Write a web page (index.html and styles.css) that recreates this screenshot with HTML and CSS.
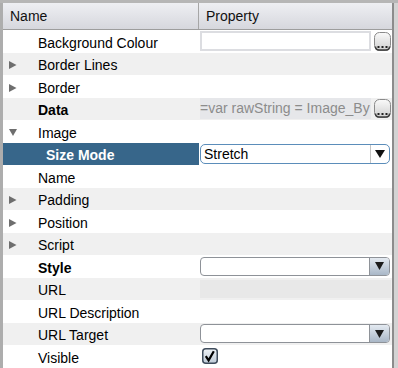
FILE: index.html
```html
<!DOCTYPE html>
<html lang="en">
<head>
    <meta charset="UTF-8">
    <title>Properties</title>
    <link rel="stylesheet" href="styles.css">
</head>
<body>
<div class="frame">
    <div class="table">
        <div class="head">
            <div class="hcell">Name</div>
            <div class="hcell">Property</div>
        </div>
        <div class="rows">
            <div class="row">
                <div class="name"><span class="tog"></span>Background Colour</div>
                <div class="val">
                    <span class="textbox"></span>
                    <span class="dots"><svg width="17" height="19" viewBox="0 0 17 19"><defs><linearGradient id="bg1" x1="0" y1="0" x2="0" y2="1"><stop offset="0" stop-color="#fafafa"/><stop offset="1" stop-color="#cfcfcf"/></linearGradient></defs><rect x="0.5" y="0.5" width="16" height="18" rx="5" fill="url(#bg1)" stroke="#8a8a8a"/><path d="M1.5 14.5 Q1.5 18 5 18 H12 Q15.5 18 15.5 14.5" fill="none" stroke="#3c3c3c" stroke-width="1.5"/><rect x="3.5" y="14" width="2" height="2" fill="#222"/><rect x="7.5" y="14" width="2" height="2" fill="#222"/><rect x="11.5" y="14" width="2" height="2" fill="#222"/></svg></span>
                </div>
            </div>
            <div class="row">
                <div class="name"><span class="tog"><svg width="8" height="8"><polygon points="0,0 7.5,4 0,8" fill="#6e6e6e"/></svg></span>Border Lines</div>
                <div class="val"></div>
            </div>
            <div class="row">
                <div class="name"><span class="tog"><svg width="8" height="8"><polygon points="0,0 7.5,4 0,8" fill="#6e6e6e"/></svg></span>Border</div>
                <div class="val"></div>
            </div>
            <div class="row">
                <div class="name bold"><span class="tog"></span>Data</div>
                <div class="val">
                    <span class="script">=var rawString = Image_By</span>
                    <span class="dots"><svg width="17" height="19" viewBox="0 0 17 19"><defs><linearGradient id="bg2" x1="0" y1="0" x2="0" y2="1"><stop offset="0" stop-color="#fafafa"/><stop offset="1" stop-color="#cfcfcf"/></linearGradient></defs><rect x="0.5" y="0.5" width="16" height="18" rx="5" fill="url(#bg2)" stroke="#8a8a8a"/><path d="M1.5 14.5 Q1.5 18 5 18 H12 Q15.5 18 15.5 14.5" fill="none" stroke="#3c3c3c" stroke-width="1.5"/><rect x="3.5" y="14" width="2" height="2" fill="#222"/><rect x="7.5" y="14" width="2" height="2" fill="#222"/><rect x="11.5" y="14" width="2" height="2" fill="#222"/></svg></span>
                </div>
            </div>
            <div class="row">
                <div class="name"><span class="tog"><svg width="8" height="7"><polygon points="0,0 8,0 4,7" fill="#6e6e6e"/></svg></span>Image</div>
                <div class="val"></div>
            </div>
            <div class="row sel">
                <div class="name bold child"><span class="tog"></span>Size Mode</div>
                <div class="val">
                    <div class="select">
                        <span class="choice">Stretch</span>
                        <span class="arrow"><svg width="10" height="8"><polygon points="0,0 10,0 5,8" fill="#111"/></svg></span>
                    </div>
                </div>
            </div>
            <div class="row">
                <div class="name"><span class="tog"></span>Name</div>
                <div class="val"></div>
            </div>
            <div class="row">
                <div class="name"><span class="tog"><svg width="8" height="8"><polygon points="0,0 7.5,4 0,8" fill="#6e6e6e"/></svg></span>Padding</div>
                <div class="val"></div>
            </div>
            <div class="row">
                <div class="name"><span class="tog"><svg width="8" height="8"><polygon points="0,0 7.5,4 0,8" fill="#6e6e6e"/></svg></span>Position</div>
                <div class="val"></div>
            </div>
            <div class="row">
                <div class="name"><span class="tog"><svg width="8" height="8"><polygon points="0,0 7.5,4 0,8" fill="#6e6e6e"/></svg></span>Script</div>
                <div class="val"></div>
            </div>
            <div class="row">
                <div class="name bold"><span class="tog"></span>Style</div>
                <div class="val">
                    <div class="combo">
                        <span class="choice"></span>
                        <span class="btn"><svg width="9" height="8"><polygon points="0,0 9,0 4.5,8" fill="#1c1c1c"/></svg></span>
                    </div>
                </div>
            </div>
            <div class="row">
                <div class="name"><span class="tog"></span>URL</div>
                <div class="val"><span class="disabled"></span></div>
            </div>
            <div class="row">
                <div class="name"><span class="tog"></span>URL Description</div>
                <div class="val"></div>
            </div>
            <div class="row">
                <div class="name"><span class="tog"></span>URL Target</div>
                <div class="val">
                    <div class="combo">
                        <span class="choice"></span>
                        <span class="btn"><svg width="9" height="8"><polygon points="0,0 9,0 4.5,8" fill="#1c1c1c"/></svg></span>
                    </div>
                </div>
            </div>
            <div class="row">
                <div class="name"><span class="tog"></span>Visible</div>
                <div class="val">
                    <span class="check"><svg width="16" height="16" viewBox="0 0 16 16"><defs><linearGradient id="cb" x1="0" y1="0" x2="0" y2="1"><stop offset="0" stop-color="#eef2f6"/><stop offset="1" stop-color="#bfcbd8"/></linearGradient></defs><rect x="0.75" y="0.75" width="14.5" height="14.5" rx="3" fill="url(#cb)" stroke="#3f4c5c" stroke-width="1.5"/><path d="M3.8 8.2 L6.6 12.4 L11.8 3.2" fill="none" stroke="#000" stroke-width="2.2"/></svg></span>
                </div>
            </div>
        </div>
    </div>
    <div class="scroll"></div>
</div>
</body>
</html>
```

FILE: styles.css
```css
body {
    margin: 0;
    font-family: 'Liberation Sans', Arial, sans-serif;
    font-size: 14px;
    color: #000;
    background: #fff;
}

.frame {
    display: flex;
    width: 398px;
    height: 368px;
    box-sizing: border-box;
    border-top: 3px solid #b6b6b6;
    overflow: hidden;
}

.table {
    flex: 1;
    border-left: 3px solid #adadad;
}

.scroll {
    width: 4px;
    border-left: 2px solid #8c8c8c;
    background: #d3d3d3;
}

.head {
    display: grid;
    grid-template-columns: 196px 1fr;
    height: 26px;
    border-bottom: 1px solid #9d9d9d;
}

.hcell {
    background: linear-gradient(#eeeff3, #d6d7dd);
    color: #111;
    padding-left: 7px;
    padding-top: 1px;
    line-height: 25px;
}

.hcell:first-child {
    border-right: 1px solid #a6a6a6;
}

.row {
    display: grid;
    grid-template-columns: 196px 1fr;
    height: 22.5px;
}

.rows .row:nth-child(even) {
    background: #f0f0f0;
}

.name {
    display: flex;
    align-items: center;
    padding-left: 6px;
    padding-top: 3px;
    box-sizing: border-box;
    white-space: nowrap;
}

.name.bold {
    font-weight: bold;
}

.tog {
    width: 29px;
    flex: none;
    display: flex;
    align-items: center;
}

.child .tog {
    width: 37px;
}

.rows .row.sel {
    background: #fff;
}

.sel .name {
    background: #37668a;
    color: #fff;
}

.val {
    display: flex;
    align-items: center;
    gap: 3px;
    padding-left: 1px;
}

.textbox {
    width: 171px;
    height: 20px;
    box-sizing: border-box;
    border: 2px solid #dcdde1;
    background: #fff;
}

.dots {
    display: flex;
    width: 17px;
    height: 19px;
}

.script {
    width: 171px;
    height: 21px;
    line-height: 21px;
    background: #e6e7ea;
    color: #8c8c8c;
    overflow: hidden;
    white-space: nowrap;
}

.select {
    display: flex;
    width: 190px;
    height: 20px;
    box-sizing: border-box;
    border: 1.5px solid #5b8dba;
    border-radius: 5px;
    background: #fff;
}

.choice {
    flex: 1;
    padding-left: 3px;
    line-height: 19px;
}

.arrow {
    width: 18px;
    border-left: 1px solid #c4c4c4;
    display: flex;
    align-items: center;
    justify-content: center;
}

.combo {
    display: flex;
    width: 190px;
    height: 19px;
    box-sizing: border-box;
    border: 1px solid #8e9298;
    border-radius: 4px;
    background: #fff;
    overflow: hidden;
}

.btn {
    width: 19px;
    border-left: 1px solid #8e9298;
    background: linear-gradient(#e4eaf1, #a9b7c7);
    display: flex;
    align-items: center;
    justify-content: center;
}

.disabled {
    width: 191px;
    height: 18px;
    background: #e8e8e8;
}

.check {
    display: flex;
    margin-left: 2px;
}
```
